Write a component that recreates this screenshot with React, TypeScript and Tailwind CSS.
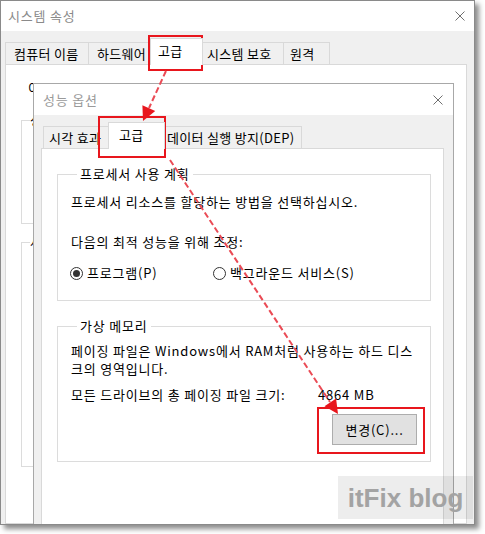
import React from "react";

type TabDef = { label: string; cls: string; active?: boolean };

const outerTabs: TabDef[] = [
  { label: "컴퓨터 이름", cls: "w-[84px] pl-[8px]" },
  { label: "하드웨어", cls: "w-[65px] -ml-px pl-[8px]" },
  { label: "고급", cls: "w-[53px] -ml-[3px] pl-[7px]", active: true },
  { label: "시스템 보호", cls: "w-[84px] -ml-[3px] pl-[6px]" },
  { label: "원격", cls: "w-[47px] -ml-px pl-[6px]" },
];

const innerTabs: TabDef[] = [
  { label: "시각 효과", cls: "w-[68px] pl-[5px]" },
  { label: "고급", cls: "w-[57px] -ml-[3px] pl-[10px]", active: true },
  { label: "데이터 실행 방지(DEP)", cls: "w-[140px] -ml-[3px] pl-[4px]" },
];

function CloseIcon() {
  return (
    <svg width="10" height="10" viewBox="0 0 10 10" className="shrink-0">
      <path d="M0.5 0.5 L9.5 9.5 M9.5 0.5 L0.5 9.5" stroke="#6f6f6f" strokeWidth="1" fill="none" />
    </svg>
  );
}

function TabRow({ tabs }: { tabs: TabDef[] }) {
  return (
    <div className="flex items-end h-[22px] shrink-0 tracking-[0.3px]">
      {tabs.map((t) => (
        <div
          key={t.label}
          className={`${t.cls} flex items-center whitespace-nowrap border border-b-0 border-[#d9d9d9] leading-[16px] ${
            t.active ? "relative z-10 h-[27px] -mb-px bg-white pb-[3px]" : "h-[22px] bg-[#f0f0f0]"
          }`}
        >
          {t.label}
        </div>
      ))}
    </div>
  );
}

function Radio({ checked }: { checked?: boolean }) {
  return (
    <span className="w-[13px] h-[13px] rounded-full border border-[#333333] bg-white flex items-center justify-center shrink-0">
      {checked && <span className="w-[7px] h-[7px] rounded-full bg-[#333333]" />}
    </span>
  );
}

function InnerWindow() {
  return (
    <div className="absolute left-[32px] top-[82px] w-[421px] h-[460px] border border-[#a8a8a8] bg-white flex flex-col">
      <div className="h-[31px] shrink-0 flex items-center justify-between pl-[9px] pr-[10px]">
        <span className="text-[#9a9a9a] leading-[16px]">성능 옵션</span>
        <CloseIcon />
      </div>
      <div className="flex-1 flex flex-col bg-[#f0f0f0] pl-[7px] pr-[9px] pt-[11px]">
        <div className="ml-[2px]">
          <TabRow tabs={innerTabs} />
        </div>
        <div className="flex-1 bg-white border border-[#d9d9d9] pl-[15px] pr-[12px] pt-[17px]">
          <fieldset className="border border-[#dcdcdc] px-[13px] pb-[19px]">
            <legend className="ml-[6px] px-[3px] leading-[16px]">프로세서 사용 계획</legend>
            <p className="mt-[12px] leading-[16px] whitespace-nowrap">
              프로세서 리소스를 할당하는 방법을 선택하십시오.
            </p>
            <p className="mt-[24px] leading-[16px] whitespace-nowrap">다음의 최적 성능을 위해 조정:</p>
            <div className="mt-[15px] flex items-center leading-[16px] -ml-px">
              <label className="w-[143px] flex items-center gap-[4px]">
                <Radio checked />
                <span>프로그램(P)</span>
              </label>
              <label className="flex items-center gap-[4px]">
                <Radio />
                <span>백그라운드 서비스(S)</span>
              </label>
            </div>
          </fieldset>

          <fieldset className="mt-[17px] border border-[#dcdcdc] px-[13px] pb-[16px] flex flex-col">
            <legend className="ml-[6px] px-[3px] leading-[16px]">가상 메모리</legend>
            <p className="mt-[8px] leading-[18px] whitespace-nowrap">
              페이징 파일은 Windows에서 RAM처럼 사용하는 하드 디스
              <br />
              크의 영역입니다.
            </p>
            <div className="mt-[9px] flex leading-[16px] whitespace-nowrap">
              <span className="w-[247px]">모든 드라이브의 총 페이징 파일 크기:</span>
              <span>4864 MB</span>
            </div>
            <button className="mt-[11px] self-end w-[85px] h-[31px] border border-[#adadad] bg-[#e1e1e1] leading-[16px]">
              변경(C)...
            </button>
          </fieldset>
        </div>
      </div>
    </div>
  );
}

function OuterWindow() {
  return (
    <div className="relative w-[475px] h-[525px] border border-[#8a8a8a] bg-white shadow-[4px_4px_5px_rgba(0,0,0,0.45)] overflow-hidden flex flex-col">
      <div className="h-[30px] shrink-0 flex items-center justify-between pl-[7px] pr-[9px]">
        <span className="text-[#8a8a8a] leading-[16px]">시스템 속성</span>
        <CloseIcon />
      </div>
      <div className="flex-1 flex flex-col bg-[#f0f0f0] pl-[4px] pr-[7px] pt-[11px]">
        <TabRow tabs={outerTabs} />
        {/* most of this panel sits under the 성능 옵션 window */}
        <div className="flex-1 bg-white border border-[#d9d9d9] pl-[15px] pt-[15px]">
          <div className="w-[12px] overflow-hidden">
            <p className="pl-[7px] leading-[16px] whitespace-nowrap">이</p>
            <fieldset className="mt-[16px] w-[60px] h-[112px] border border-[#dcdcdc]">
              <legend className="ml-[8px] leading-[16px]">성</legend>
            </fieldset>
            <fieldset className="mt-[10px] w-[60px] h-[233px] border border-[#dcdcdc]">
              <legend className="ml-[8px] leading-[16px]">사</legend>
            </fieldset>
          </div>
        </div>
      </div>
      <InnerWindow />
    </div>
  );
}

function Annotations() {
  return (
    <svg className="absolute inset-0 pointer-events-none" width="485" height="534" viewBox="0 0 485 534">
      <rect x="149" y="36" width="53" height="34" fill="none" stroke="#e8161d" strokeWidth="2" />
      <rect x="99" y="117" width="66" height="40" fill="none" stroke="#e8161d" strokeWidth="2" />
      <rect x="318" y="408" width="106" height="45" fill="none" stroke="#e8161d" strokeWidth="2" />
      <line x1="166" y1="71" x2="149" y2="108" stroke="#ea4b55" strokeWidth="2" strokeDasharray="6 3" />
      <polygon points="143,121 142.4,105.3 155.2,111.1" fill="#e8161d" />
      <line x1="170" y1="160" x2="330" y2="402" stroke="#ea4b55" strokeWidth="2" strokeDasharray="6 3" />
      <polygon points="338,414 324.5,406.2 336.1,398.4" fill="#e8161d" />
    </svg>
  );
}

export default function App() {
  return (
    <div className="relative w-[485px] h-[534px] bg-white overflow-hidden font-['Noto_Sans_CJK_KR',sans-serif] text-[13px] tracking-[0.8px] text-black">
      <OuterWindow />
      <Annotations />
      <div className="absolute left-[338px] top-[476px] w-[135px] h-[43px] bg-black/[0.07] flex items-center justify-center">
        <span className="font-['Liberation_Sans',sans-serif] font-bold text-[26px] leading-[30px] tracking-normal text-[#a3a3a3] whitespace-nowrap">
          itFix blog
        </span>
      </div>
    </div>
  );
}
